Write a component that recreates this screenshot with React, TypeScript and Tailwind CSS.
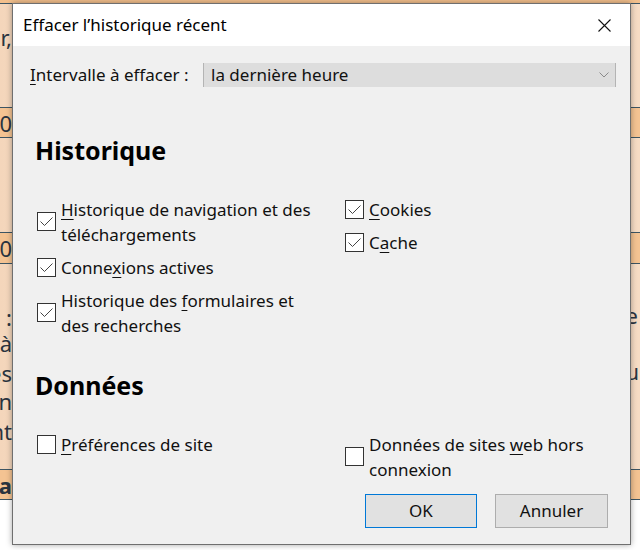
import React from 'react';

type ItemProps = {
  checked?: boolean;
  children: React.ReactNode;
  width?: string;
};

const Box = ({ checked }: { checked?: boolean }) => (
  <span className="flex h-[19px] w-[19px] shrink-0 items-center justify-center border border-[#333333] bg-white">
    {checked && (
      <svg width="17" height="17" viewBox="0 0 17 17">
        <path d="M2.5 8.5 L6.5 12.5 L14.5 4.5" fill="none" stroke="#444444" strokeWidth="1" />
      </svg>
    )}
  </span>
);

const Item = ({ checked, children, width = 'max-w-[258px]' }: ItemProps) => (
  <div className="flex items-center gap-[5px]">
    <Box checked={checked} />
    <span className={`${width} text-[17px] leading-[25px] text-[#111111]`}>{children}</span>
  </div>
);

const U = ({ children }: { children: React.ReactNode }) => (
  <span className="underline decoration-1 underline-offset-[3px]">{children}</span>
);

// bits of the page that peek out on the left of the dialog
const Peek = ({ text, bold }: { text: string; bold?: boolean }) => (
  <div className="flex h-[30px] w-[12px] justify-end overflow-hidden">
    <span className={`whitespace-nowrap text-[22px] leading-[30px] text-[#2a3440] ${bold ? 'font-bold' : ''}`}>{text}</span>
  </div>
);

export default function App() {
  return (
    <div className="relative h-[550px] w-[640px] overflow-hidden font-['Noto_Sans',sans-serif]">
      {/* page behind the dialog */}
      <div className="flex h-full flex-col bg-gradient-to-r from-[#f4d6bb] via-[#faeee2] to-[#f6dcc4]">
        <div className="h-[3px] bg-[#f2bf8c]" />
        <div className="h-[104px] border-t border-[#3d5563] pt-[18px]">
          <Peek text="Choisir," />
        </div>
        <div className="h-[31px] border-y border-[#3d5563] bg-[#f4c392]">
          <Peek text="10" />
        </div>
        <div className="h-[94px]" />
        <div className="h-[32px] border-y border-[#3d5563] bg-[#f4c392]">
          <Peek text="20" />
        </div>
        <div className="flex h-[205px] flex-col pt-[38px]">
          <div className="flex h-[26px] justify-between">
            <Peek text=":" />
            <span className="pr-[2px] text-[22px] leading-[26px] text-[#2a3440]">e</span>
          </div>
          <Peek text="à" />
          <div className="flex h-[28px] justify-between">
            <Peek text="les" />
            <span className="pr-[1px] text-[22px] leading-[26px] text-[#2a3440]">u</span>
          </div>
          <Peek text="bon" />
          <Peek text="ant" />
        </div>
        <div className="h-[31px] border-y border-[#3d5563] bg-[#f4c392]">
          <Peek text="Eta" bold />
        </div>
        <div className="flex-1 bg-white" />
      </div>

      {/* dialog */}
      <div className="absolute left-[12px] top-[3px] flex h-[542px] w-[619px] flex-col border border-[#6f6f6f] bg-[#f0f0f0] shadow-[0_0_6px_rgba(0,0,0,0.35)]">
        <div className="flex h-[42px] items-center justify-between bg-white pl-[10px] pr-[19px]">
          <span className="text-[17px] text-black">Effacer l’historique récent</span>
          <svg width="13" height="13" viewBox="0 0 13 13">
            <path d="M0.5 0.5 L12.5 12.5 M12.5 0.5 L0.5 12.5" stroke="#111111" strokeWidth="1.1" />
          </svg>
        </div>

        <div className="flex flex-1 flex-col pl-[24px] pr-[14px]">
          <div className="mt-[16px] flex items-center">
            <span className="-ml-[7px] w-[173px] text-[17px] text-[#111111]">
              <U>I</U>ntervalle à effacer :
            </span>
            <div className="flex h-[24px] flex-1 items-center justify-between border-x border-[#b4b4b4] bg-[#dddddd] pl-[7px] pr-[6px]">
              <span className="text-[17px] text-[#111111]">la dernière heure</span>
              <svg width="10" height="6" viewBox="0 0 10 6">
                <path d="M0.5 0.5 L5 5 L9.5 0.5" fill="none" stroke="#8a8a8a" strokeWidth="1" />
              </svg>
            </div>
          </div>

          <h2 className="-ml-[2px] mt-[46px] text-[25px] font-bold leading-[32px] text-black">Historique</h2>

          <div className="mt-[31px] grid grid-cols-[308px_1fr]">
            <div className="flex flex-col gap-[8px]">
              <Item checked>
                <U>H</U>istorique de navigation et des téléchargements
              </Item>
              <Item checked>
                Conne<U>x</U>ions actives
              </Item>
              <Item checked>
                Historique des <U>f</U>ormulaires et des recherches
              </Item>
            </div>
            <div className="flex flex-col gap-[8px] self-start">
              <Item checked>
                <U>C</U>ookies
              </Item>
              <Item checked>
                C<U>a</U>che
              </Item>
            </div>
          </div>

          <h2 className="-ml-[2px] mt-[31px] text-[25px] font-bold leading-[32px] text-black">Données</h2>

          <div className="mt-[31px] grid grid-cols-[308px_1fr]">
            <div className="self-start">
              <Item>
                <U>P</U>références de site
              </Item>
            </div>
            <Item width="max-w-[240px]">
              Données de sites <U>w</U>eb hors connexion
            </Item>
          </div>

          <div className="mt-[12px] flex justify-end gap-[18px] pr-[8px]">
            <button className="h-[34px] w-[112px] border border-[#0078d7] bg-[#e1e1e1] text-[17px] text-[#111111]">
              OK
            </button>
            <button className="h-[34px] w-[113px] border border-[#adadad] bg-[#e1e1e1] text-[17px] text-[#111111]">
              Annuler
            </button>
          </div>
        </div>
      </div>
    </div>
  );
}
